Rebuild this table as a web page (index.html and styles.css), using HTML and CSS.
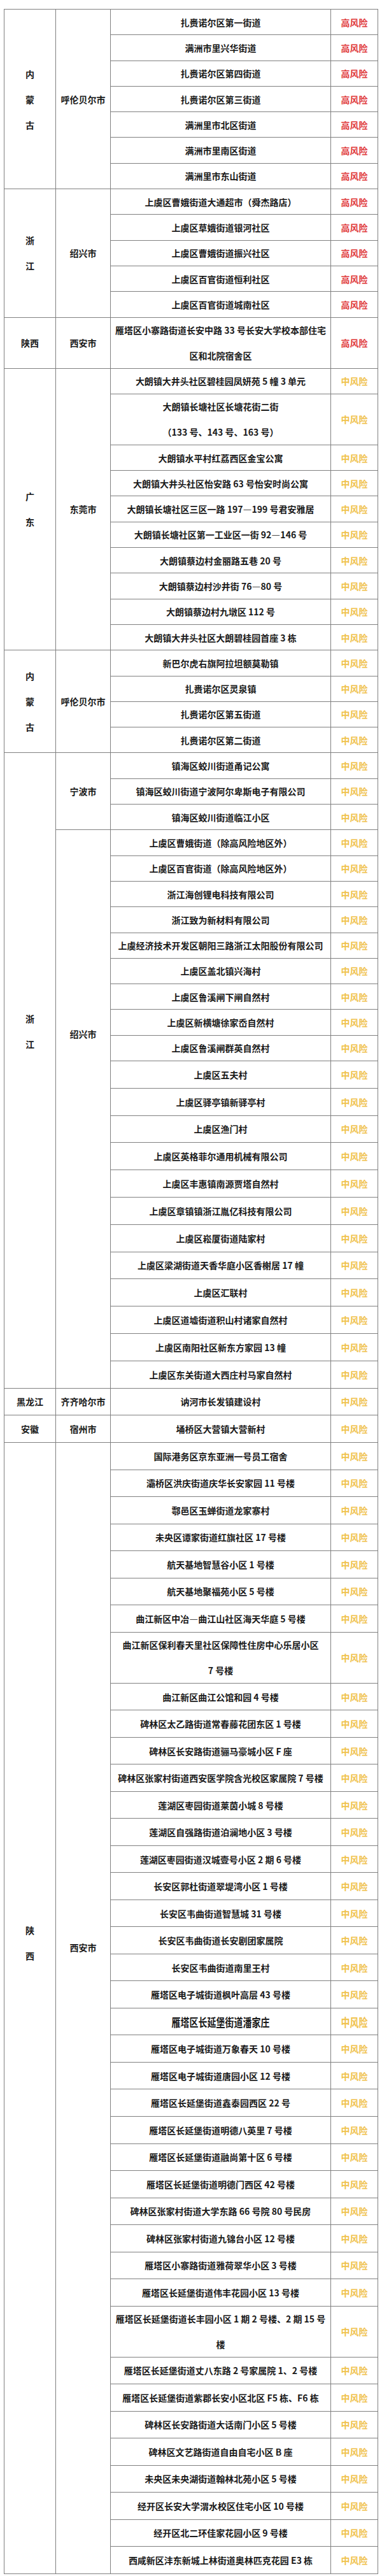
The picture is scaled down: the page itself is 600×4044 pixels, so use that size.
FILE: index.html
```html
<!DOCTYPE html>
<html lang="zh-CN">
<head>
<meta charset="utf-8">
<title>风险地区列表</title>
<link rel="stylesheet" href="styles.css">
</head>
<body>
<div class="sheet">

  <div class="grp">
    <div class="prov">内<br>蒙<br>古</div>
    <div class="cities">
      <div class="cg">
        <div class="city">呼伦贝尔市</div>
        <div class="rows">
          <div class="row ra"><div class="place">扎赉诺尔区第一街道</div><div class="risk hi">高风险</div></div>
          <div class="row ra"><div class="place">满洲市里兴华街道</div><div class="risk hi">高风险</div></div>
          <div class="row ra"><div class="place">扎赉诺尔区第四街道</div><div class="risk hi">高风险</div></div>
          <div class="row ra"><div class="place">扎赉诺尔区第三街道</div><div class="risk hi">高风险</div></div>
          <div class="row ra"><div class="place">满洲里市北区街道</div><div class="risk hi">高风险</div></div>
          <div class="row ra"><div class="place">满洲市里南区街道</div><div class="risk hi">高风险</div></div>
          <div class="row ra"><div class="place">满洲里市东山街道</div><div class="risk hi">高风险</div></div>
        </div>
      </div>
    </div>
  </div>

  <div class="grp">
    <div class="prov">浙<br>江</div>
    <div class="cities">
      <div class="cg">
        <div class="city">绍兴市</div>
        <div class="rows">
          <div class="row ra"><div class="place">上虞区曹娥街道大通超市（舜杰路店）</div><div class="risk hi">高风险</div></div>
          <div class="row ra"><div class="place">上虞区草娥街道银河社区</div><div class="risk hi">高风险</div></div>
          <div class="row ra"><div class="place">上虞区曹娥街道振兴社区</div><div class="risk hi">高风险</div></div>
          <div class="row ra"><div class="place">上虞区百官街道恒利社区</div><div class="risk hi">高风险</div></div>
          <div class="row ra"><div class="place">上虞区百官街道城南社区</div><div class="risk hi">高风险</div></div>
        </div>
      </div>
    </div>
  </div>

  <div class="grp">
    <div class="prov">陕西</div>
    <div class="cities">
      <div class="cg">
        <div class="city">西安市</div>
        <div class="rows">
          <div class="row rd"><div class="place">雁塔区小寨路街道长安中路 33 号长安大学校本部住宅<br>区和北院宿舍区</div><div class="risk hi">高风险</div></div>
        </div>
      </div>
    </div>
  </div>

  <div class="grp">
    <div class="prov">广<br>东</div>
    <div class="cities">
      <div class="cg">
        <div class="city">东莞市</div>
        <div class="rows">
          <div class="row ra"><div class="place">大朗镇大井头社区碧桂园凤妍苑 5 幢 3 单元</div><div class="risk mid">中风险</div></div>
          <div class="row rd"><div class="place">大朗镇长塘社区长塘花街二街<br>（133 号、143 号、163 号）</div><div class="risk mid">中风险</div></div>
          <div class="row ra"><div class="place">大朗镇水平村红荔西区金宝公寓</div><div class="risk mid">中风险</div></div>
          <div class="row ra"><div class="place">大朗镇大井头社区怡安路 63 号怡安时尚公寓</div><div class="risk mid">中风险</div></div>
          <div class="row ra"><div class="place">大朗镇长塘社区三区一路 197—199 号君安雅居</div><div class="risk mid">中风险</div></div>
          <div class="row ra"><div class="place">大朗镇长塘社区第一工业区一街 92—146 号</div><div class="risk mid">中风险</div></div>
          <div class="row ra"><div class="place">大朗镇蔡边村金丽路五巷 20 号</div><div class="risk mid">中风险</div></div>
          <div class="row ra"><div class="place">大朗镇蔡边村沙井街 76—80 号</div><div class="risk mid">中风险</div></div>
          <div class="row ra"><div class="place">大朗镇蔡边村九墩区 112 号</div><div class="risk mid">中风险</div></div>
          <div class="row ra"><div class="place">大朗镇大井头社区大朗碧桂园首座 3 栋</div><div class="risk mid">中风险</div></div>
        </div>
      </div>
    </div>
  </div>

  <div class="grp">
    <div class="prov">内<br>蒙<br>古</div>
    <div class="cities">
      <div class="cg">
        <div class="city">呼伦贝尔市</div>
        <div class="rows">
          <div class="row ra"><div class="place">新巴尔虎右旗阿拉坦额莫勒镇</div><div class="risk mid">中风险</div></div>
          <div class="row ra"><div class="place">扎赉诺尔区灵泉镇</div><div class="risk mid">中风险</div></div>
          <div class="row ra"><div class="place">扎赉诺尔区第五街道</div><div class="risk mid">中风险</div></div>
          <div class="row ra"><div class="place">扎赉诺尔区第二街道</div><div class="risk mid">中风险</div></div>
        </div>
      </div>
    </div>
  </div>

  <div class="grp">
    <div class="prov top zj">浙<br>江</div>
    <div class="cities">
      <div class="cg">
        <div class="city">宁波市</div>
        <div class="rows">
          <div class="row ra"><div class="place">镇海区蛟川街道甬记公寓</div><div class="risk mid">中风险</div></div>
          <div class="row ra"><div class="place">镇海区蛟川街道宁波阿尔卑斯电子有限公司</div><div class="risk mid">中风险</div></div>
          <div class="row ra"><div class="place">镇海区蛟川街道临江小区</div><div class="risk mid">中风险</div></div>
        </div>
      </div>
      <div class="cg">
        <div class="city top sx">绍兴市</div>
        <div class="rows">
          <div class="row ra"><div class="place">上虞区曹娥街道（除高风险地区外）</div><div class="risk mid">中风险</div></div>
          <div class="row ra"><div class="place">上虞区百官街道（除高风险地区外）</div><div class="risk mid">中风险</div></div>
          <div class="row ra"><div class="place">浙江海创锂电科技有限公司</div><div class="risk mid">中风险</div></div>
          <div class="row ra"><div class="place">浙江致为新材料有限公司</div><div class="risk mid">中风险</div></div>
          <div class="row ra"><div class="place">上虞经济技术开发区朝阳三路浙江太阳股份有限公司</div><div class="risk mid">中风险</div></div>
          <div class="row ra"><div class="place">上虞区盖北镇兴海村</div><div class="risk mid">中风险</div></div>
          <div class="row ra"><div class="place">上虞区鲁溪闸下闸自然村</div><div class="risk mid">中风险</div></div>
          <div class="row ra"><div class="place">上虞区新横塘徐家岙自然村</div><div class="risk mid">中风险</div></div>
          <div class="row ra"><div class="place">上虞区鲁溪闸群英自然村</div><div class="risk mid">中风险</div></div>
          <div class="row rb"><div class="place">上虞区五夫村</div><div class="risk mid">中风险</div></div>
          <div class="row rb"><div class="place">上虞区驿亭镇新驿亭村</div><div class="risk mid">中风险</div></div>
          <div class="row rb"><div class="place">上虞区渔门村</div><div class="risk mid">中风险</div></div>
          <div class="row rb"><div class="place">上虞区英格菲尔通用机械有限公司</div><div class="risk mid">中风险</div></div>
          <div class="row rb"><div class="place">上虞区丰惠镇南源贾塔自然村</div><div class="risk mid">中风险</div></div>
          <div class="row rb"><div class="place">上虞区章镇镇浙江胤亿科技有限公司</div><div class="risk mid">中风险</div></div>
          <div class="row rb"><div class="place">上虞区崧厦街道陆家村</div><div class="risk mid">中风险</div></div>
          <div class="row rb"><div class="place">上虞区梁湖街道天香华庭小区香榭居 17 幢</div><div class="risk mid">中风险</div></div>
          <div class="row rb"><div class="place">上虞区汇联村</div><div class="risk mid">中风险</div></div>
          <div class="row rb"><div class="place">上虞区道墟街道积山村诸家自然村</div><div class="risk mid">中风险</div></div>
          <div class="row rb"><div class="place">上虞区南阳社区新东方家园 13 幢</div><div class="risk mid">中风险</div></div>
          <div class="row rb"><div class="place">上虞区东关街道大西庄村马家自然村</div><div class="risk mid">中风险</div></div>
        </div>
      </div>
    </div>
  </div>

  <div class="grp">
    <div class="prov">黑龙江</div>
    <div class="cities">
      <div class="cg">
        <div class="city">齐齐哈尔市</div>
        <div class="rows">
          <div class="row rb"><div class="place">讷河市长发镇建设村</div><div class="risk mid">中风险</div></div>
        </div>
      </div>
    </div>
  </div>

  <div class="grp">
    <div class="prov">安徽</div>
    <div class="cities">
      <div class="cg">
        <div class="city">宿州市</div>
        <div class="rows">
          <div class="row rb"><div class="place">埇桥区大营镇大营新村</div><div class="risk mid">中风险</div></div>
        </div>
      </div>
    </div>
  </div>

  <div class="grp">
    <div class="prov top shx">陕<br>西</div>
    <div class="cities">
      <div class="cg">
        <div class="city top xa">西安市</div>
        <div class="rows">
          <div class="row rc"><div class="place">国际港务区京东亚洲一号员工宿舍</div><div class="risk mid">中风险</div></div>
          <div class="row rc"><div class="place">灞桥区洪庆街道庆华长安家园 11 号楼</div><div class="risk mid">中风险</div></div>
          <div class="row rc"><div class="place">鄠邑区玉蝉街道龙家寨村</div><div class="risk mid">中风险</div></div>
          <div class="row rc"><div class="place">未央区谭家街道红旗社区 17 号楼</div><div class="risk mid">中风险</div></div>
          <div class="row rc"><div class="place">航天基地智慧谷小区 1 号楼</div><div class="risk mid">中风险</div></div>
          <div class="row rc"><div class="place">航天基地聚福苑小区 5 号楼</div><div class="risk mid">中风险</div></div>
          <div class="row rc"><div class="place">曲江新区中冶—曲江山社区海天华庭 5 号楼</div><div class="risk mid">中风险</div></div>
          <div class="row rd"><div class="place">曲江新区保利春天里社区保障性住房中心乐居小区<br>7 号楼</div><div class="risk mid">中风险</div></div>
          <div class="row rc"><div class="place">曲江新区曲江公馆和园 4 号楼</div><div class="risk mid">中风险</div></div>
          <div class="row rc"><div class="place">碑林区太乙路街道常春藤花团东区 1 号楼</div><div class="risk mid">中风险</div></div>
          <div class="row rc"><div class="place">碑林区长安路街道骊马豪城小区 F 座</div><div class="risk mid">中风险</div></div>
          <div class="row rc"><div class="place">碑林区张家村街道西安医学院含光校区家属院 7 号楼</div><div class="risk mid">中风险</div></div>
          <div class="row rc"><div class="place">莲湖区枣园街道莱茵小城 8 号楼</div><div class="risk mid">中风险</div></div>
          <div class="row rc"><div class="place">莲湖区自强路街道泊澜地小区 3 号楼</div><div class="risk mid">中风险</div></div>
          <div class="row rc"><div class="place">莲湖区枣园街道汉城壹号小区 2 期 6 号楼</div><div class="risk mid">中风险</div></div>
          <div class="row rc"><div class="place">长安区郭杜街道翠堤湾小区 1 号楼</div><div class="risk mid">中风险</div></div>
          <div class="row rc"><div class="place">长安区韦曲街道智慧城 31 号楼</div><div class="risk mid">中风险</div></div>
          <div class="row rc"><div class="place">长安区韦曲街道长安剧团家属院</div><div class="risk mid">中风险</div></div>
          <div class="row rc"><div class="place">长安区韦曲街道南里王村</div><div class="risk mid">中风险</div></div>
          <div class="row rc"><div class="place">雁塔区电子城街道枫叶高层 43 号楼</div><div class="risk mid">中风险</div></div>
          <div class="row rc"><div class="place"><span class="tall">雁塔区长延堡街道潘家庄</span></div><div class="risk mid"><span class="tall">中风险</span></div></div>
          <div class="row rc"><div class="place">雁塔区电子城街道万象春天 10 号楼</div><div class="risk mid">中风险</div></div>
          <div class="row rc"><div class="place">雁塔区电子城街道唐园小区 12 号楼</div><div class="risk mid">中风险</div></div>
          <div class="row rc"><div class="place">雁塔区长延堡街道鑫泰园西区 22 号</div><div class="risk mid">中风险</div></div>
          <div class="row rc"><div class="place">雁塔区长延堡街道明德八英里 7 号楼</div><div class="risk mid">中风险</div></div>
          <div class="row rc"><div class="place">雁塔区长延堡街道融尚第十区 6 号楼</div><div class="risk mid">中风险</div></div>
          <div class="row rc"><div class="place">雁塔区长延堡街道明德门西区 42 号楼</div><div class="risk mid">中风险</div></div>
          <div class="row rc"><div class="place">碑林区张家村街道大学东路 66 号院 80 号民房</div><div class="risk mid">中风险</div></div>
          <div class="row rc"><div class="place">碑林区张家村街道九锦台小区 12 号楼</div><div class="risk mid">中风险</div></div>
          <div class="row rc"><div class="place">雁塔区小寨路街道雅荷翠华小区 3 号楼</div><div class="risk mid">中风险</div></div>
          <div class="row rc"><div class="place">雁塔区长延堡街道伟丰花园小区 13 号楼</div><div class="risk mid">中风险</div></div>
          <div class="row rd"><div class="place">雁塔区长延堡街道长丰园小区 1 期 2 号楼、2 期 15 号<br>楼</div><div class="risk mid">中风险</div></div>
          <div class="row rc"><div class="place">雁塔区长延堡街道丈八东路 2 号家属院 1、2 号楼</div><div class="risk mid">中风险</div></div>
          <div class="row rc"><div class="place">雁塔区长延堡街道紫郡长安小区北区 F5 栋、F6 栋</div><div class="risk mid">中风险</div></div>
          <div class="row rc"><div class="place">碑林区长安路街道大话南门小区 5 号楼</div><div class="risk mid">中风险</div></div>
          <div class="row rc"><div class="place">碑林区文艺路街道自由自宅小区 B 座</div><div class="risk mid">中风险</div></div>
          <div class="row rc"><div class="place">未央区未央湖街道翰林北苑小区 5 号楼</div><div class="risk mid">中风险</div></div>
          <div class="row rc"><div class="place">经开区长安大学渭水校区住宅小区 10 号楼</div><div class="risk mid">中风险</div></div>
          <div class="row rc"><div class="place">经开区北二环佳家花园小区 9 号楼</div><div class="risk mid">中风险</div></div>
          <div class="row rc"><div class="place">西咸新区沣东新城上林街道奥林匹克花园 E3 栋</div><div class="risk mid">中风险</div></div>
        </div>
      </div>
    </div>
  </div>

</div>
</body>
</html>
```

FILE: styles.css
```css
* {
  box-sizing: border-box;
}

html, body {
  margin: 0;
  padding: 0;
  background: #ffffff;
}

body {
  width: 600px;
  font-family: "Noto Sans CJK SC", "Noto Sans", sans-serif;
  font-size: 14px;
  font-weight: 700;
  color: #1a1a1a;
}

.sheet {
  margin: 14px 0 0 6px;
  width: 588px;
  border-top: 1px solid #808080;
  border-left: 1px solid #808080;
}

.grp {
  display: flex;
}

.prov {
  width: 81px;
  flex: none;
  display: flex;
  align-items: center;
  justify-content: center;
  text-align: center;
  line-height: 40px;
  border-right: 1px solid #808080;
  border-bottom: 1px solid #808080;
}

.cities {
  flex: 1;
  display: flex;
  flex-direction: column;
}

.cg {
  display: flex;
}

.city {
  width: 86px;
  flex: none;
  display: flex;
  align-items: center;
  justify-content: center;
  text-align: center;
  line-height: 40px;
  border-right: 1px solid #808080;
  border-bottom: 1px solid #808080;
}

.top {
  align-items: flex-start;
}

.prov.zj {
  padding-top: 397px;
}

.city.sx {
  padding-top: 300px;
}

.prov.shx {
  padding-top: 745px;
}

.city.xa {
  padding-top: 772px;
}

.rows {
  flex: 1;
  display: flex;
  flex-direction: column;
}

.row {
  display: flex;
}

.ra { height: 40.3px; }
.rb { height: 42.8px; }
.rc { height: 42.52px; }
.rd { height: 80px; }

.place {
  width: 346px;
  flex: none;
  display: flex;
  align-items: center;
  justify-content: center;
  text-align: center;
  white-space: nowrap;
  line-height: 40px;
  border-right: 1px solid #808080;
  border-bottom: 1px solid #808080;
}

.risk {
  width: 74px;
  flex: none;
  display: flex;
  align-items: center;
  justify-content: center;
  line-height: 40px;
  border-right: 1px solid #808080;
  border-bottom: 1px solid #808080;
}

.hi {
  color: #e0393b;
}

.mid {
  color: #f0c24e;
}

.tall {
  display: inline-block;
  transform: scaleY(1.3);
}
```
